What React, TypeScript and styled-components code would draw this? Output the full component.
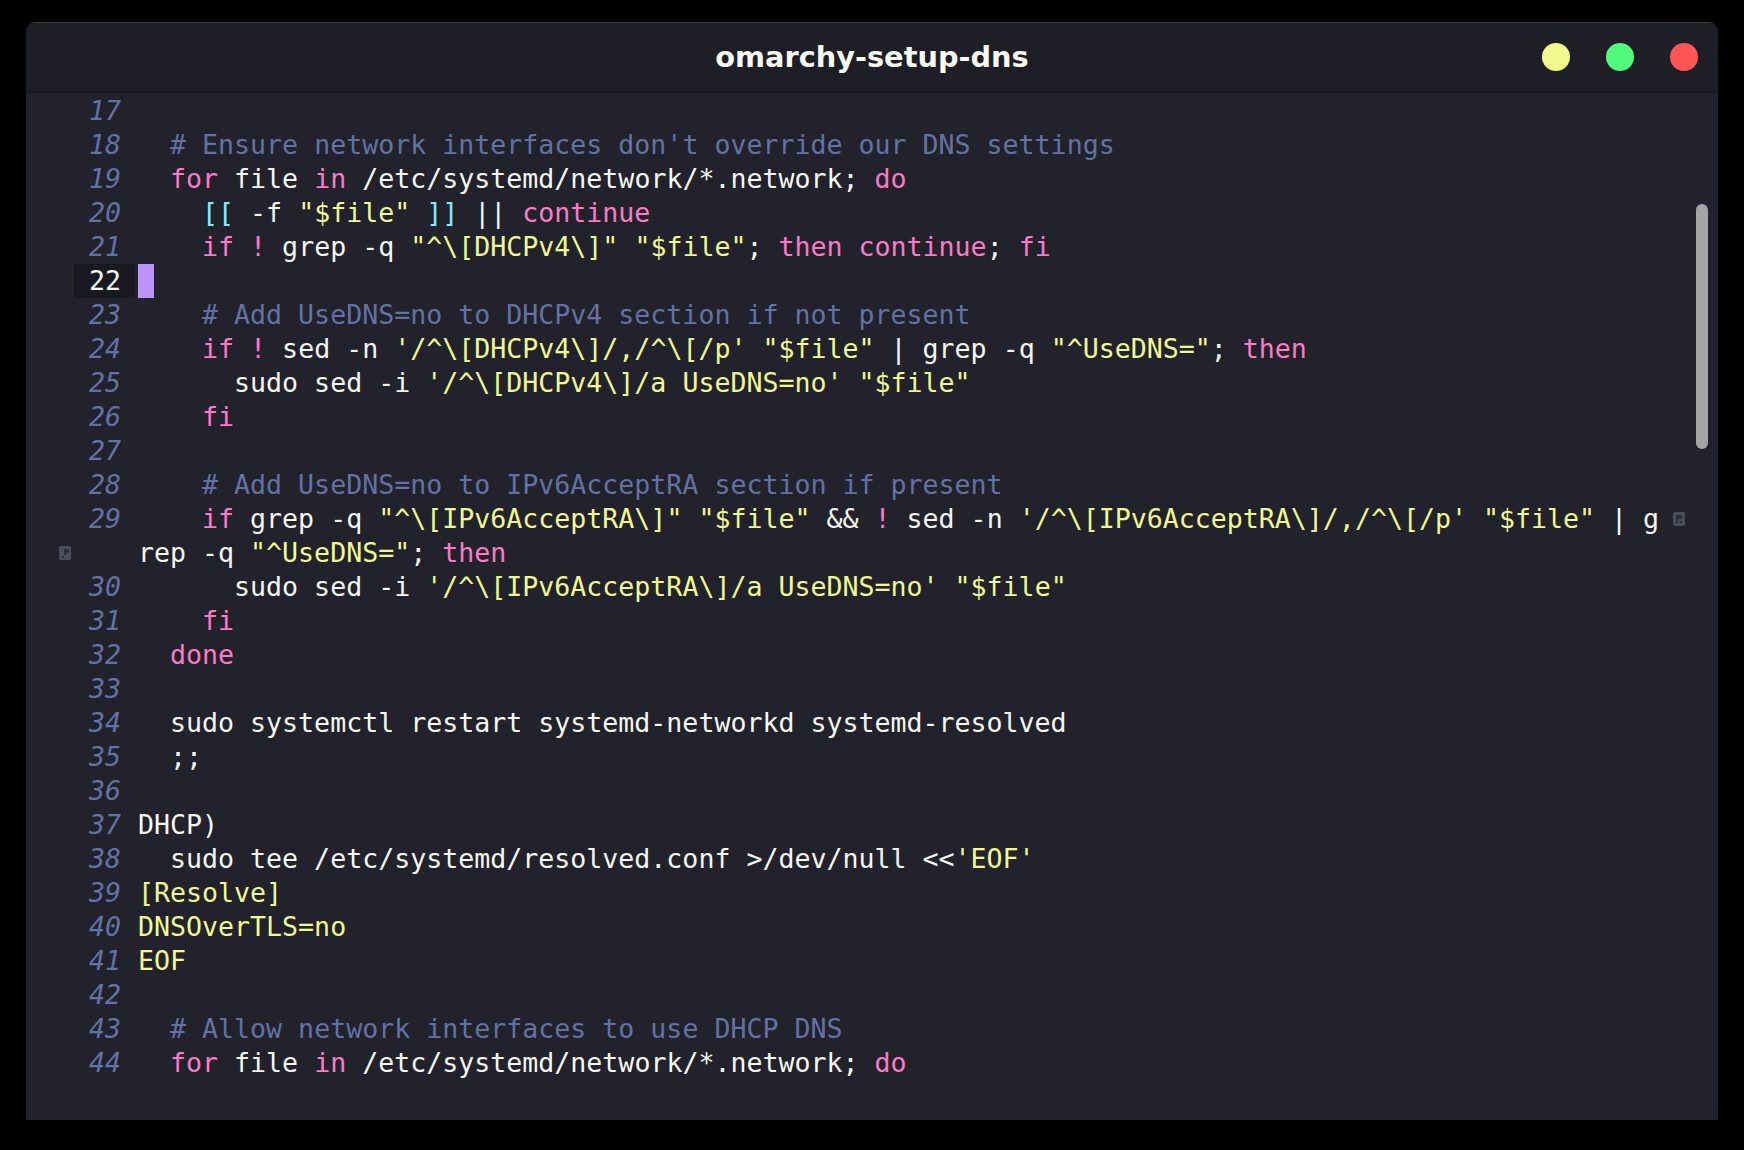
import React from "react";
import styled, { createGlobalStyle } from "styled-components";

type Kind = "t" | "k" | "s" | "c" | "b";
type Tok = [Kind, string];

interface Row {
  num?: number;
  toks: Tok[];
  current?: boolean;
  wrapIn?: boolean;
  wrapOut?: boolean;
}

const COLORS: Record<Kind, string> = {
  t: "#f8f8f2",
  k: "#ff79c6",
  s: "#f1fa8c",
  c: "#6272a4",
  b: "#8be9fd",
};

const forLine: Tok[] = [
  ["t", "  "],
  ["k", "for"],
  ["t", " file "],
  ["k", "in"],
  ["t", " /etc/systemd/network/*.network; "],
  ["k", "do"],
];

const rows: Row[] = [
  { num: 17, toks: [] },
  { num: 18, toks: [["t", "  "], ["c", "# Ensure network interfaces don't override our DNS settings"]] },
  { num: 19, toks: forLine },
  {
    num: 20,
    toks: [
      ["t", "    "], ["b", "[["], ["t", " -f "], ["s", "\"$file\""], ["t", " "], ["b", "]]"],
      ["t", " || "], ["k", "continue"],
    ],
  },
  {
    num: 21,
    toks: [
      ["t", "    "], ["k", "if"], ["t", " "], ["k", "!"], ["t", " grep -q "], ["s", "\"^\\[DHCPv4\\]\""],
      ["t", " "], ["s", "\"$file\""], ["t", "; "], ["k", "then"], ["t", " "], ["k", "continue"],
      ["t", "; "], ["k", "fi"],
    ],
  },
  { num: 22, toks: [], current: true },
  { num: 23, toks: [["t", "    "], ["c", "# Add UseDNS=no to DHCPv4 section if not present"]] },
  {
    num: 24,
    toks: [
      ["t", "    "], ["k", "if"], ["t", " "], ["k", "!"], ["t", " sed -n "], ["s", "'/^\\[DHCPv4\\]/,/^\\[/p'"],
      ["t", " "], ["s", "\"$file\""], ["t", " | grep -q "], ["s", "\"^UseDNS=\""], ["t", "; "], ["k", "then"],
    ],
  },
  {
    num: 25,
    toks: [["t", "      sudo sed -i "], ["s", "'/^\\[DHCPv4\\]/a UseDNS=no'"], ["t", " "], ["s", "\"$file\""]],
  },
  { num: 26, toks: [["t", "    "], ["k", "fi"]] },
  { num: 27, toks: [] },
  { num: 28, toks: [["t", "    "], ["c", "# Add UseDNS=no to IPv6AcceptRA section if present"]] },
  {
    num: 29,
    wrapOut: true,
    toks: [
      ["t", "    "], ["k", "if"], ["t", " grep -q "], ["s", "\"^\\[IPv6AcceptRA\\]\""], ["t", " "],
      ["s", "\"$file\""], ["t", " && "], ["k", "!"], ["t", " sed -n "],
      ["s", "'/^\\[IPv6AcceptRA\\]/,/^\\[/p'"], ["t", " "], ["s", "\"$file\""], ["t", " | g"],
    ],
  },
  { wrapIn: true, toks: [["t", "rep -q "], ["s", "\"^UseDNS=\""], ["t", "; "], ["k", "then"]] },
  {
    num: 30,
    toks: [["t", "      sudo sed -i "], ["s", "'/^\\[IPv6AcceptRA\\]/a UseDNS=no'"], ["t", " "], ["s", "\"$file\""]],
  },
  { num: 31, toks: [["t", "    "], ["k", "fi"]] },
  { num: 32, toks: [["t", "  "], ["k", "done"]] },
  { num: 33, toks: [] },
  { num: 34, toks: [["t", "  sudo systemctl restart systemd-networkd systemd-resolved"]] },
  { num: 35, toks: [["t", "  ;;"]] },
  { num: 36, toks: [] },
  { num: 37, toks: [["t", "DHCP)"]] },
  { num: 38, toks: [["t", "  sudo tee /etc/systemd/resolved.conf >/dev/null <<"], ["s", "'EOF'"]] },
  { num: 39, toks: [["s", "[Resolve]"]] },
  { num: 40, toks: [["s", "DNSOverTLS=no"]] },
  { num: 41, toks: [["s", "EOF"]] },
  { num: 42, toks: [] },
  { num: 43, toks: [["t", "  "], ["c", "# Allow network interfaces to use DHCP DNS"]] },
  { num: 44, toks: forLine },
];

const GlobalStyle = createGlobalStyle`
  html, body {
    margin: 0;
    padding: 0;
    background: #000000;
  }
  body {
    width: 1744px;
    height: 1150px;
    overflow: hidden;
  }
`;

const Page = styled.div`
  box-sizing: border-box;
  width: 1744px;
  height: 1150px;
  padding: 22px 26px 30px 26px;
  display: flex;
  background: #000000;
`;

const Window = styled.div`
  flex: 1;
  display: flex;
  flex-direction: column;
  background: #21222c;
  border-radius: 10px 10px 0 0;
  box-shadow: inset 0 1px 0 #3a3c47;
  overflow: hidden;
`;

const TitleBar = styled.div`
  box-sizing: border-box;
  height: 71px;
  flex: none;
  display: grid;
  grid-template-columns: 1fr auto 1fr;
  align-items: center;
  background: #1d1e26;
  border-top: 1px solid #363844;
  border-bottom: 1px solid #191a21;
`;

const Title = styled.div`
  grid-column: 2;
  font-family: "DejaVu Sans", "Liberation Sans", sans-serif;
  font-weight: 700;
  font-size: 28.8px;
  color: #f8f8f2;
  letter-spacing: 0;
  padding-bottom: 2px;
`;

const Lights = styled.div`
  grid-column: 3;
  justify-self: end;
  display: flex;
  gap: 36px;
  padding-right: 20px;
  padding-bottom: 2px;
`;

const Light = styled.span<{ $color: string }>`
  width: 28px;
  height: 28px;
  border-radius: 50%;
  background: ${(p) => p.$color};
`;

const Editor = styled.div`
  position: relative;
  flex: 1;
  display: flex;
  flex-direction: column;
  padding-top: 1px;
  font-family: "DejaVu Sans Mono", "Liberation Mono", monospace;
  font-size: 26.6px;
`;

const CodeRow = styled.div`
  display: grid;
  grid-template-columns: 48px 61px 3px 1520px 1fr;
  height: 34px;
  line-height: 34px;
`;

const WrapSign = styled.div<{ $side: "left" | "right" }>`
  display: flex;
  align-items: center;
  justify-content: ${(p) => (p.$side === "left" ? "flex-end" : "flex-start")};
  padding: ${(p) => (p.$side === "left" ? "0 2px 0 0" : "0 0 0 14px")};
`;

const LineNo = styled.div<{ $current?: boolean }>`
  box-sizing: border-box;
  text-align: right;
  padding-right: 14px;
  font-style: ${(p) => (p.$current ? "normal" : "italic")};
  color: ${(p) => (p.$current ? "#f8f8f2" : "#6272a4")};
  background: ${(p) => (p.$current ? "#191a21" : "transparent")};
`;

const CodeText = styled.div`
  grid-column: 4;
  white-space: pre;
  color: #f8f8f2;
  display: flex;
  align-items: stretch;
`;

const Token = styled.span<{ $kind: Kind }>`
  color: ${(p) => COLORS[p.$kind]};
`;

const Cursor = styled.span`
  display: inline-block;
  width: 16px;
  height: 34px;
  background: #bd93f9;
`;

const ScrollThumb = styled.div`
  position: absolute;
  left: 1670px;
  top: 111px;
  width: 12px;
  height: 245px;
  border-radius: 6px;
  background: #a4a4a4;
`;

const WrapIcon: React.FC<{ dir: "in" | "out" }> = ({ dir }) => (
  <svg width="14" height="16" viewBox="0 0 14 16" aria-hidden="true">
    <rect x="1" y="1" width="12" height="14" rx="2" fill="#4a4d5d" />
    {dir === "in" ? (
      <g fill="#2c2e3a">
        <path d="M6 4h3.5a2 2 0 0 1 0 4H8v2H6z" />
        <rect x="4" y="11" width="2" height="2" />
      </g>
    ) : (
      <g fill="#2c2e3a">
        <path d="M4 4h4.5a2 2 0 0 1 0 4H6v4H4z" />
        <rect x="8" y="10" width="2" height="2" />
      </g>
    )}
  </svg>
);

export default function App() {
  return (
    <>
      <GlobalStyle />
      <Page>
        <Window>
          <TitleBar>
            <Title>omarchy-setup-dns</Title>
            <Lights>
              <Light $color="#f1fa8c" />
              <Light $color="#50fa7b" />
              <Light $color="#ff5555" />
            </Lights>
          </TitleBar>
          <Editor>
            {rows.map((row, i) => (
              <CodeRow key={i}>
                <WrapSign $side="left">{row.wrapIn ? <WrapIcon dir="in" /> : null}</WrapSign>
                <LineNo $current={row.current}>{row.num ?? ""}</LineNo>
                <CodeText>
                  {row.current ? <Cursor /> : null}
                  {row.toks.map((t, j) => (
                    <Token key={j} $kind={t[0]}>
                      {t[1]}
                    </Token>
                  ))}
                </CodeText>
                <WrapSign $side="right">{row.wrapOut ? <WrapIcon dir="out" /> : null}</WrapSign>
              </CodeRow>
            ))}
            <ScrollThumb />
          </Editor>
        </Window>
      </Page>
    </>
  );
}
